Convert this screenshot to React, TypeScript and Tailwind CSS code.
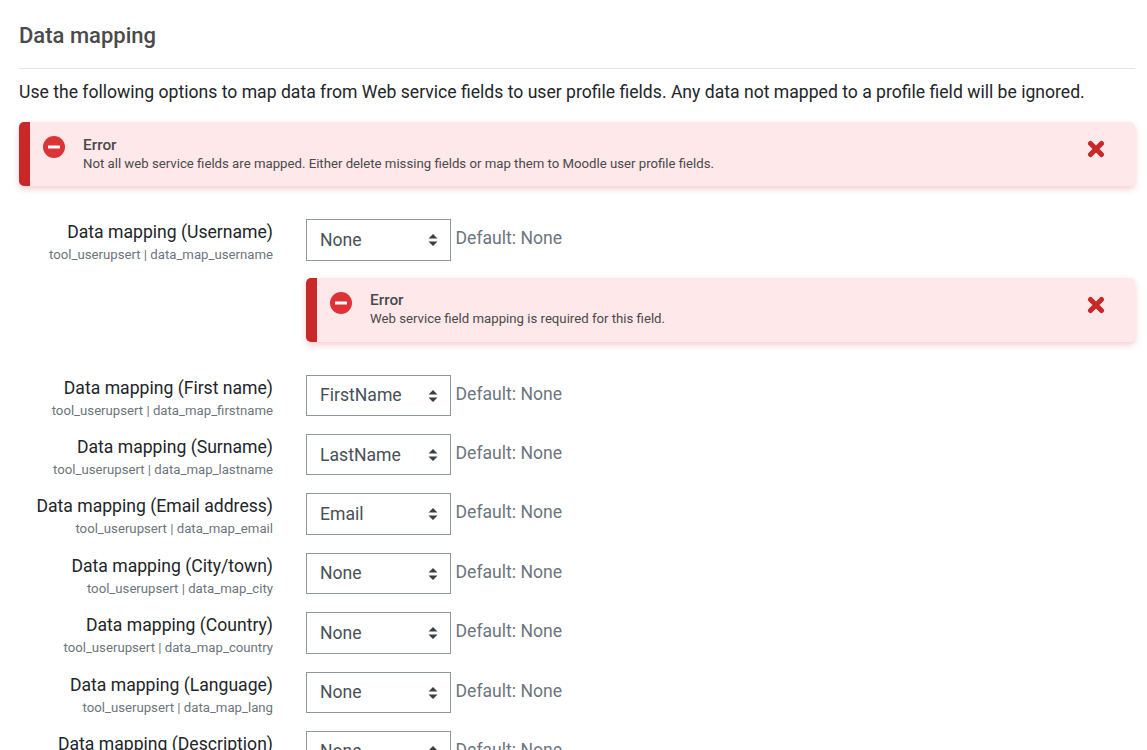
const ROWS = [
  { label: "Data mapping (First name)", key: "data_map_firstname", value: "FirstName" },
  { label: "Data mapping (Surname)", key: "data_map_lastname", value: "LastName" },
  { label: "Data mapping (Email address)", key: "data_map_email", value: "Email" },
  { label: "Data mapping (City/town)", key: "data_map_city", value: "None" },
  { label: "Data mapping (Country)", key: "data_map_country", value: "None" },
  { label: "Data mapping (Language)", key: "data_map_lang", value: "None" },
  { label: "Data mapping (Description)", key: "data_map_description", value: "None" },
];

const Alert = ({ text, bodyClass }: { text: string; bodyClass: string }) => (
  <div className="flex h-16 items-start overflow-hidden rounded-[5px] bg-[#ffe8ea] shadow-[0_3px_6px_rgba(220,50,60,0.25)]">
    <div className="h-full w-[11px] shrink-0 bg-[#c92828]" />
    <svg viewBox="0 0 22 22" className="ml-[13px] mt-[14px] h-[22px] w-[22px] shrink-0">
      <circle cx="11" cy="11" r="11" fill="#dc3336" />
      <rect x="5" y="9.5" width="12" height="3" rx="0.5" fill="#ffffff" />
    </svg>
    <div className={`ml-[18px] flex-1 ${bodyClass}`}>
      <div className="text-[15.4px] leading-[20px] font-medium text-[#4a4a4a]">Error</div>
      <div className="text-[13.2px] leading-[18px] text-[#4a4a4a]">{text}</div>
    </div>
    <svg viewBox="0 0 18 18" className="mr-[30px] mt-[18px] h-[18px] w-[18px] shrink-0">
      <path d="M3.5 3.5 L14.5 14.5 M14.5 3.5 L3.5 14.5" stroke="#c92828" strokeWidth="5" strokeLinecap="round" />
    </svg>
  </div>
);

const Select = ({ value }: { value: string }) => (
  <div className="relative h-[41.5px] w-[145px] shrink-0">
    <select
      defaultValue={value}
      className="h-full w-full appearance-none rounded-none border border-[#8f959e] bg-white pl-[13px] text-[17.6px] text-[#495057] outline-none"
    >
      <option>{value}</option>
    </select>
    <svg viewBox="0 0 10 14" className="pointer-events-none absolute right-[13px] top-[14px] h-[14px] w-[10px]">
      <path d="M5 1 L9.5 5.5 H0.5 Z M5 13 L9.5 8.5 H0.5 Z" fill="#3a3f45" />
    </svg>
  </div>
);

const Row = ({ label, name, value }: { label: string; name: string; value: string }) => (
  <div className="flex h-[59.4px] shrink-0 items-start">
    <div className="w-[254px] shrink-0 text-right">
      <div className="text-[17.6px] leading-[26px] text-[#212529]">{label}</div>
      <div className="text-[13.2px] leading-[19px] text-[#6c757d]">tool_userupsert | {name}</div>
    </div>
    <div className="ml-[33px]">
      <Select value={value} />
    </div>
    <div className="ml-[4.5px] text-[17.6px] leading-[38px] text-[#6c757d]">Default: None</div>
  </div>
);

export default function App() {
  return (
    <div
      className="flex h-[750px] flex-col overflow-hidden bg-white pl-[19px] pr-[12px]"
      style={{ fontFamily: "Roboto, sans-serif" }}
    >
      <h3 className="mt-[21px] shrink-0 text-[22px] leading-[30px] font-medium text-[#4a4a4a]">Data mapping</h3>
      <div className="mt-[17px] h-px shrink-0 bg-[#e2e3e5]" />
      <p className="mt-[10px] shrink-0 text-[17.6px] leading-[26px] text-[#212529]">
        Use the following options to map data from Web service fields to user profile fields. Any data not mapped to a profile field will be ignored.
      </p>
      <div className="mt-[17px] shrink-0">
        <Alert
          bodyClass="mt-[13px]"
          text="Not all web service fields are mapped. Either delete missing fields or map them to Moodle user profile fields."
        />
      </div>
      <div className="mt-[33px] flex h-[155.6px] shrink-0 items-start">
        <div className="w-[254px] shrink-0 text-right">
          <div className="text-[17.6px] leading-[26px] text-[#212529]">Data mapping (Username)</div>
          <div className="text-[13.2px] leading-[19px] text-[#6c757d]">tool_userupsert | data_map_username</div>
        </div>
        <div className="ml-[33px] flex-1">
          <div className="flex items-start">
            <Select value="None" />
            <div className="ml-[4.5px] text-[17.6px] leading-[38px] text-[#6c757d]">Default: None</div>
          </div>
          <div className="mt-[17px]">
            <Alert bodyClass="mt-[12px]" text="Web service field mapping is required for this field." />
          </div>
        </div>
      </div>
      {ROWS.map((r) => (
        <Row key={r.key} label={r.label} name={r.key} value={r.value} />
      ))}
    </div>
  );
}
